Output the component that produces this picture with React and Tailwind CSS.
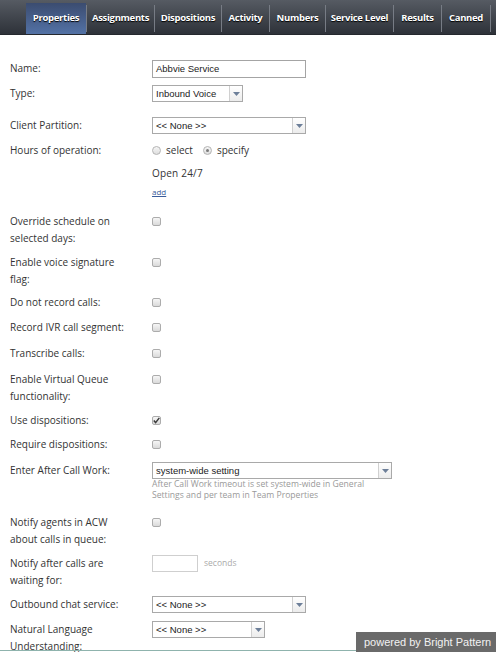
import React from 'react';

const tabs = [
  { name: 'Properties', w: 'w-[60px]', active: true },
  { name: 'Assignments', w: 'w-[67px]' },
  { name: 'Dispositions', w: 'w-[66px]' },
  { name: 'Activity', w: 'w-[47px]' },
  { name: 'Numbers', w: 'w-[55px]' },
  { name: 'Service Level', w: 'w-[67px]' },
  { name: 'Results', w: 'w-[47px]' },
  { name: 'Canned', w: 'w-[48px]' },
];

function Checkbox({ checked }) {
  return (
    <div className="mt-[4px] flex h-[9px] w-[9px] items-center justify-center rounded-[2px] border border-[#acacac] bg-gradient-to-b from-[#f6f6f6] to-[#dadada]">
      {checked && (
        <svg width="7" height="7" viewBox="0 0 7 7">
          <path d="M0.8 3.6 L2.6 5.6 L6.3 0.9" fill="none" stroke="#3a3a3a" strokeWidth="1.5" />
        </svg>
      )}
    </div>
  );
}

function Radio({ checked }) {
  return (
    <span className="flex h-[9px] w-[9px] items-center justify-center rounded-full border border-[#b4b4b4] bg-gradient-to-b from-[#f6f6f6] to-[#dedede]">
      {checked && <span className="h-[3px] w-[3px] rounded-full bg-[#7a7a7a]" />}
    </span>
  );
}

function Select({ w, value }) {
  return (
    <div className={`flex h-[17px] ${w} border border-[#a9a9a9] bg-white`}>
      <div className="flex-1 truncate pl-[3px] font-['Liberation_Sans',Arial,sans-serif] text-[9.5px] leading-[15px] text-[#222]">
        {value}
      </div>
      <div className="flex w-[13px] items-center justify-center border-l border-[#d0d0d0] bg-gradient-to-b from-[#ffffff] to-[#ececec]">
        <svg width="7" height="4" viewBox="0 0 7 4">
          <path d="M0 0 H7 L3.5 4 Z" fill="#6d7f99" />
        </svg>
      </div>
    </div>
  );
}

function Row({ h, label, children }) {
  return (
    <div className={`flex ${h}`}>
      <div className="w-[152px] shrink-0 pl-[10px] text-[10px] leading-[17px] text-[#333]">{label}</div>
      <div className="flex-1">{children}</div>
    </div>
  );
}

export default function App() {
  return (
    <div className="relative h-[652px] w-[496px] overflow-hidden bg-white font-['Open_Sans',Arial,sans-serif]">
      <div className="flex h-[35px] items-end border-b border-[#25282e] bg-gradient-to-b from-[#565b63] to-[#2e3239] pl-[26px]">
        {tabs.map((t) => (
          <React.Fragment key={t.name}>
            <div
              className={`${t.w} flex h-[31px] items-center justify-center text-[9.5px] font-bold tracking-[-0.3px] text-white [text-shadow:0_1px_1px_#000] ${
                t.active ? 'bg-gradient-to-b from-[#3b4c70] to-[#5372a6]' : ''
              }`}
            >
              {t.name}
            </div>
            <div className="mb-[2px] h-[27px] w-[1px] bg-[#777c85]" />
          </React.Fragment>
        ))}
      </div>

      <div className="pt-[25px]">
        <Row h="h-[25px]" label="Name:">
          <div className="h-[18px] w-[154px] border border-[#a4a4a4] pl-[3px] font-['Liberation_Sans',Arial,sans-serif] text-[9.5px] leading-[16px] text-[#222]">
            Abbvie Service
          </div>
        </Row>
        <Row h="h-[32px]" label="Type:">
          <Select w="w-[91px]" value="Inbound Voice" />
        </Row>
        <Row h="h-[25px]" label="Client Partition:">
          <Select w="w-[154px]" value="<< None >>" />
        </Row>
        <Row h="h-[71px]" label="Hours of operation:">
          <div className="flex h-[17px] items-center text-[10px] text-[#333]">
            <Radio />
            <span className="ml-[5px]">select</span>
            <span className="ml-[10px]"><Radio checked /></span>
            <span className="ml-[5px]">specify</span>
          </div>
          <div className="mt-[6px] text-[10px] leading-[17px] tracking-[0.2px] text-[#333]">Open 24/7</div>
          <div className="mt-[1px] text-[8px] leading-[17px] text-[#3a5c9a] underline">add</div>
        </Row>
        <Row h="h-[41px]" label={<>Override schedule on<br />selected days:</>}>
          <Checkbox />
        </Row>
        <Row h="h-[40px]" label={<>Enable voice signature<br />flag:</>}>
          <Checkbox />
        </Row>
        <Row h="h-[25px]" label="Do not record calls:">
          <Checkbox />
        </Row>
        <Row h="h-[26px]" label="Record IVR call segment:">
          <Checkbox />
        </Row>
        <Row h="h-[26px]" label="Transcribe calls:">
          <Checkbox />
        </Row>
        <Row h="h-[41px]" label={<>Enable Virtual Queue<br />functionality:</>}>
          <Checkbox />
        </Row>
        <Row h="h-[24px]" label="Use dispositions:">
          <Checkbox checked />
        </Row>
        <Row h="h-[26px]" label="Require dispositions:">
          <Checkbox />
        </Row>
        <Row h="h-[52px]" label="Enter After Call Work:">
          <Select w="w-[240px]" value="system-wide setting" />
          <div className="whitespace-nowrap text-[8.6px] leading-[11px] text-[#999]">
            After Call Work timeout is set system-wide in General
            <br />
            Settings and per team in Team Properties
          </div>
        </Row>
        <Row h="h-[41px]" label={<>Notify agents in ACW<br />about calls in queue:</>}>
          <Checkbox />
        </Row>
        <Row h="h-[41px]" label={<>Notify after calls are<br />waiting for:</>}>
          <div className="flex items-center">
            <div className="h-[17px] w-[46px] border border-[#cfcfcf]" />
            <span className="ml-[6px] text-[8.5px] text-[#aaa]">seconds</span>
          </div>
        </Row>
        <Row h="h-[25px]" label="Outbound chat service:">
          <Select w="w-[154px]" value="<< None >>" />
        </Row>
        <Row h="h-[41px]" label={<>Natural Language<br />Understanding:</>}>
          <Select w="w-[113px]" value="<< None >>" />
        </Row>
      </div>

      <div className="absolute bottom-[1px] left-0 right-0 h-[1px] bg-[#8fb3ad]" />
      <div className="absolute bottom-0 right-0 h-[20px] w-[140px] whitespace-nowrap bg-[#6a6a6a] pl-[8px] font-['Liberation_Sans',Arial,sans-serif] text-[11px] leading-[20px] text-[#f2f2f2]">
        powered by Bright Pattern
      </div>
    </div>
  );
}
